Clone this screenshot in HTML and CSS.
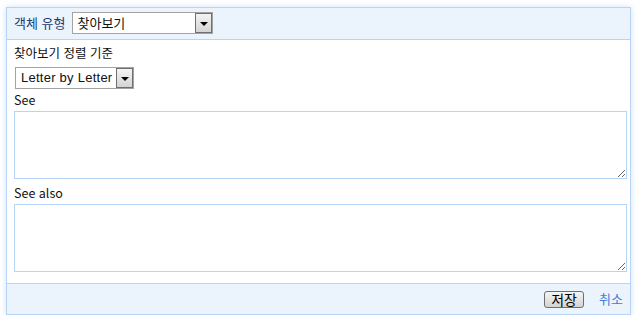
FILE: index.html
```html
<!DOCTYPE html>
<html lang="ko">
<head>
    <meta charset="UTF-8">
    <title>찾아보기</title>
    <link rel="stylesheet" href="styles.css">
</head>
<body>
    <div class="panel">
        <div class="panel-header">
            <span class="header-label">객체 유형</span>
            <div class="combo combo--type">
                <span class="combo-text">찾아보기</span>
                <span class="combo-arrow"></span>
            </div>
        </div>

        <div class="panel-body">
            <div class="field-label field-label--first">찾아보기 정렬 기준</div>
            <div class="combo combo--sort">
                <span class="combo-text combo-text--latin">Letter by Letter</span>
                <span class="combo-arrow"></span>
            </div>

            <div class="field-label">See</div>
            <textarea class="field-text"></textarea>

            <div class="field-label">See also</div>
            <textarea class="field-text"></textarea>
        </div>

        <div class="panel-footer">
            <button type="button" class="save-button">저장</button>
            <a href="#" class="cancel-link">취소</a>
        </div>
    </div>
</body>
</html>
```

FILE: styles.css
```css
:root {
    --panel-border: #b7d3f5;
    --panel-tint: #ebf3fd;
    --text-primary: #111;
    --label-blue: #1d3c70;
    --link-blue: #3b7fd6;
    --combo-border: #a3a3a3;

    --font-ko: "Noto Sans CJK KR", "Noto Sans", sans-serif;
    --font-latin: "Liberation Sans", "Noto Sans", sans-serif;
}

* {
    box-sizing: border-box;
}

body {
    margin: 0;
    padding: 7px 10px 0 6px;
    font-family: var(--font-ko);
    font-size: 12px;
    color: var(--text-primary);
    background: #fff;
}

.panel {
    width: 625px;
    border: 1px solid var(--panel-border);
    box-shadow: 0 0 6px rgba(150, 190, 240, 0.45);
    background: #fff;
}

.panel-header {
    display: flex;
    align-items: center;
    gap: 7px;
    height: 32px;
    padding: 0 0 1px 7px;
    background: var(--panel-tint);
    border-bottom: 1px solid var(--panel-border);
}

.header-label {
    color: var(--label-blue);
    font-size: 13px;
    line-height: 16px;
}

/* fake combo box: text plus an arrow button */
.combo {
    display: flex;
    align-items: stretch;
    height: 22px;
    border: 1px solid var(--combo-border);
    background: #fff;
}

.combo--type {
    width: 141px;
}

.combo--sort {
    width: 119px;
    margin: 5px 0 0 1px;
}

.combo-text {
    flex: 1;
    padding: 0 4px;
    font-size: 13px;
    line-height: 19px;
    white-space: nowrap;
    overflow: hidden;
}

.combo-text--latin {
    font-family: var(--font-latin);
    font-size: 13px;
    padding-left: 5px;
    letter-spacing: 0.25px;
}

.combo-arrow {
    position: relative;
    width: 17px;
    border: 1px solid #6f6f6f;
    background: linear-gradient(#f4f4f4, #d4d4d4);
}

.combo-arrow::after {
    content: "";
    position: absolute;
    left: 4px;
    top: 8px;
    border-left: 4px solid transparent;
    border-right: 4px solid transparent;
    border-top: 4px solid #000;
}

.panel-body {
    padding: 4px 4px 11px 7px;
}

.field-label {
    font-size: 12.5px;
    line-height: 16px;
    margin: 3px 0 3px;
}

.field-label--first {
    line-height: 18px;
    margin: 0;
}

.field-text {
    display: block;
    width: 613px;
    height: 68px;
    margin: 0;
    border: 1px solid var(--panel-border);
    font-family: var(--font-ko);
    font-size: 12px;
    resize: both;
}

.field-text + .field-label {
    margin-top: 6px;
}

.panel-footer {
    display: flex;
    align-items: center;
    justify-content: flex-end;
    gap: 15px;
    height: 31px;
    padding: 0 7px 0 0;
    background: var(--panel-tint);
    border-top: 1px solid var(--panel-border);
}

.save-button {
    width: 40px;
    height: 17px;
    padding: 0;
    border: 1px solid #6e6e6e;
    border-radius: 3px;
    background: linear-gradient(#f5f5f5, #d3d3d3);
    font-family: var(--font-ko);
    font-size: 14px;
    line-height: 14px;
    color: #000;
}

.cancel-link {
    color: var(--link-blue);
    text-decoration: none;
    font-size: 13px;
    line-height: 16px;
}
```
